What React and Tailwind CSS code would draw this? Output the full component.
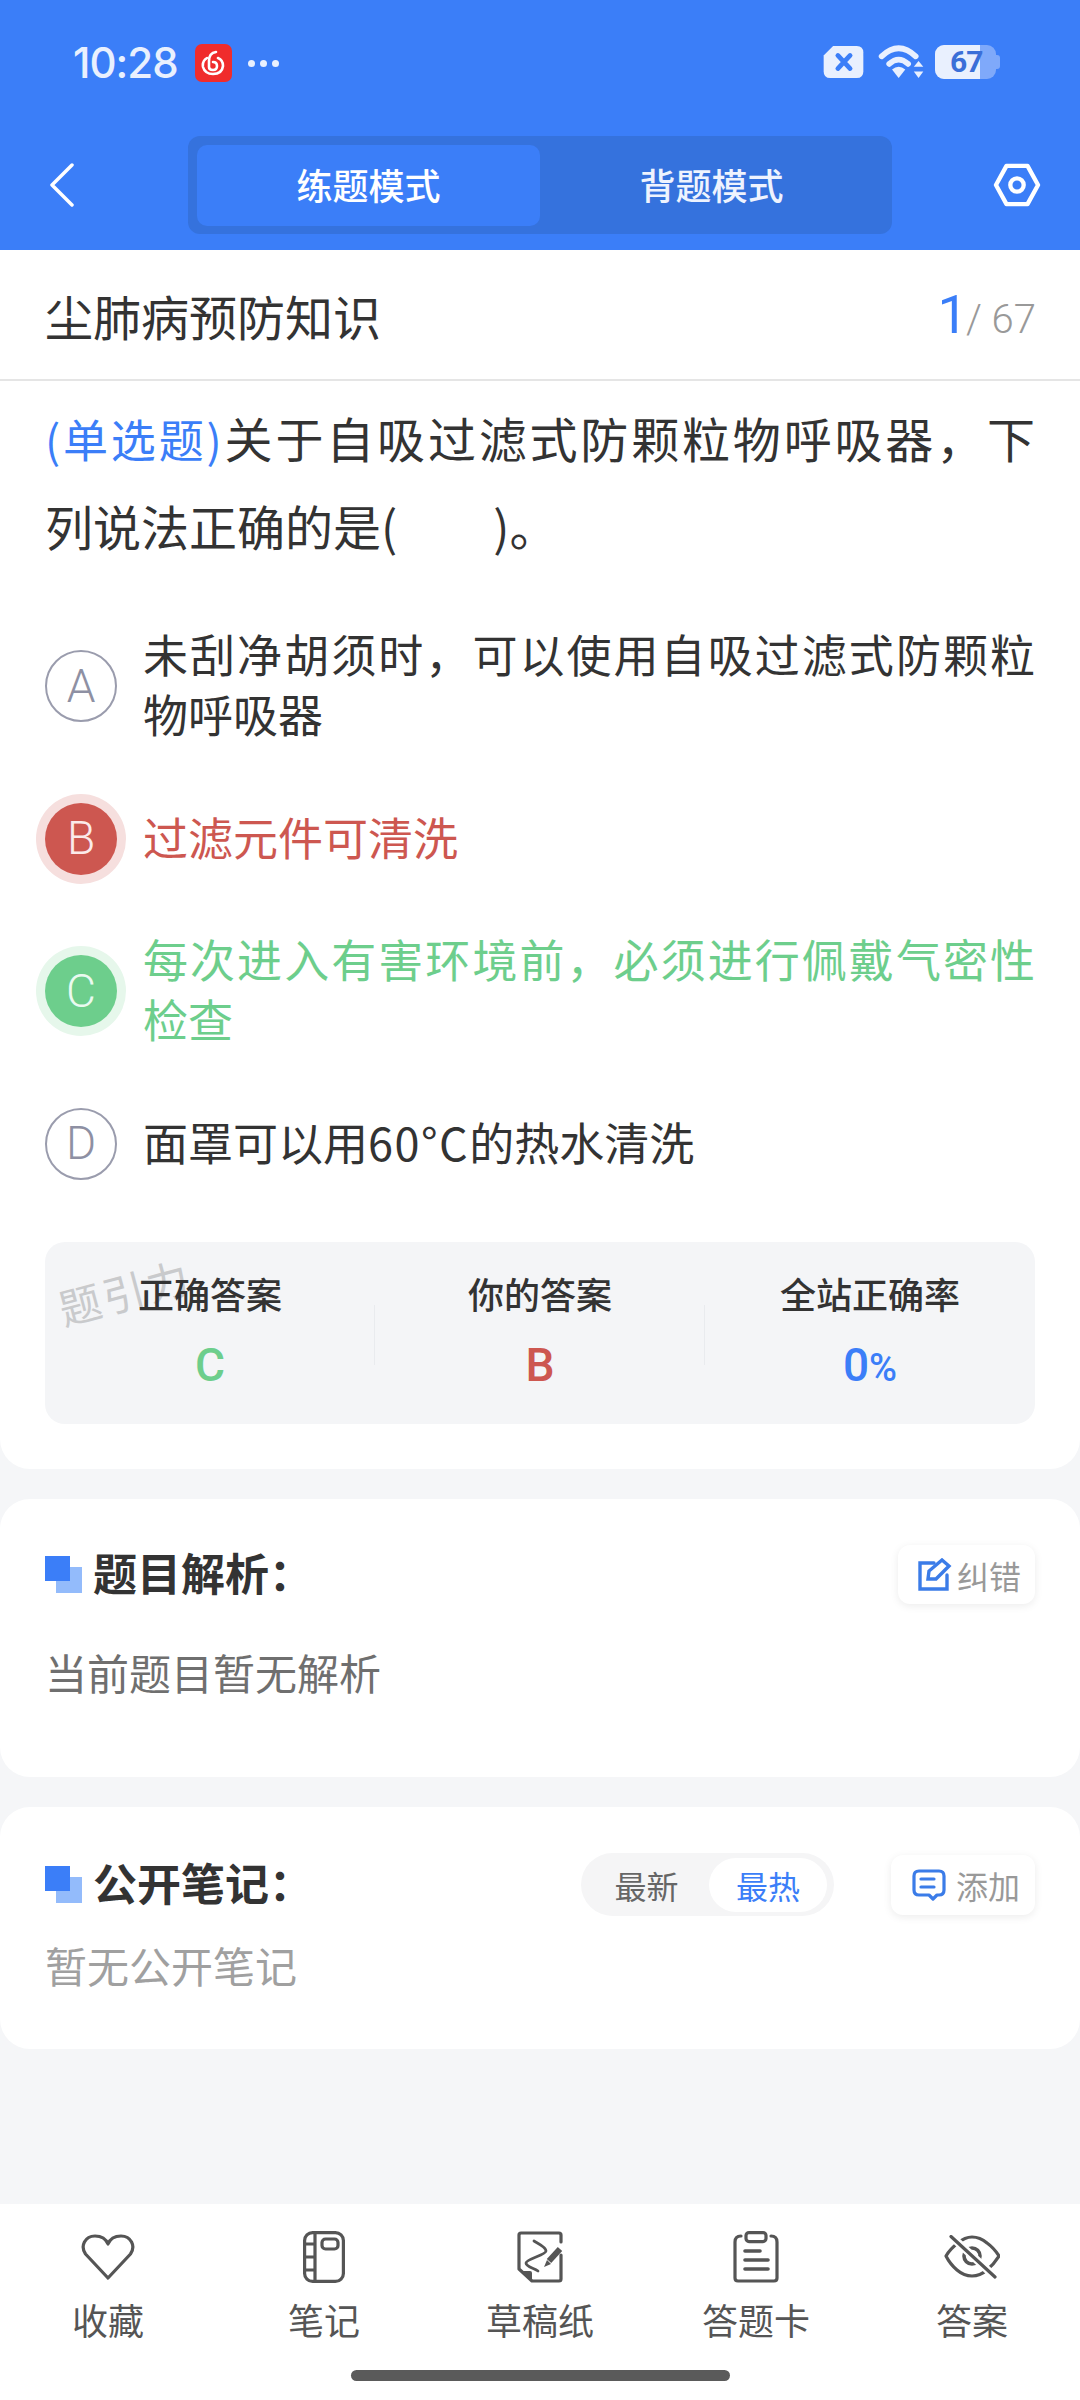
import React from 'react';

const cjk = { fontFamily: '"Noto Sans CJK SC", "Noto Sans", sans-serif' };

const BackIcon = () => (
  <svg width="28" height="44" viewBox="0 0 28 44" fill="none" stroke="#fff" strokeWidth="3.5" strokeLinecap="round" strokeLinejoin="round">
    <path d="M24 2 L4 22 L24 42" />
  </svg>
);

const SettingIcon = () => (
  <svg width="48" height="44" viewBox="0 0 50 46" fill="none" stroke="#fff" strokeWidth="4.5" strokeLinejoin="round">
    <path d="M14 3 H36 L47 23 L36 43 H14 L3 23 Z" />
    <circle cx="25" cy="23" r="7" />
  </svg>
);

const StatusIcons = () => (
  <div className="mt-[3px] flex items-center">
    <svg width="43" height="34" viewBox="0 0 44 36">
      <path d="M11 1 H36 Q43 1 43 8 V28 Q43 35 36 35 H8 Q1 35 1 28 V11 Z" fill="#e9f0fe" />
      <path d="M16 11 L29 25 M29 11 L16 25" stroke="#3b7ef8" strokeWidth="5" strokeLinecap="round" />
    </svg>
    <svg className="ml-[13px]" width="47" height="36" viewBox="0 0 48 38" fill="none">
      <path d="M3 13 Q21 -4 39 13" stroke="#e9f0fe" strokeWidth="6" strokeLinecap="round" />
      <path d="M11 21 Q21 12 31 21" stroke="#e9f0fe" strokeWidth="6" strokeLinecap="round" />
      <path d="M14 27 Q21 21 28 27 L21 36 Z" fill="#e9f0fe" />
      <path d="M37 24 L42 18 L47 24 Z M37 29 H47 L42 36 Z" fill="#e9f0fe" />
    </svg>
    <div className="relative ml-[10px] flex h-[34px] w-[65px] items-center">
      <div className="absolute left-0 top-0 h-[34px] w-[61px] rounded-[9px] bg-[#7fa9fa]" />
      <div className="absolute right-0 top-[10px] h-[14px] w-[5px] rounded-r-[3px] bg-[#7fa9fa]" />
      <div className="absolute left-0 top-0 h-[34px] w-[45px] rounded-l-[9px] bg-[#e9f0fe]" />
      <span className="relative ml-[15px] text-[30px] font-bold leading-none tracking-[-1px] text-[#3b6fd8]" style={{ fontFamily: 'Roboto, sans-serif' }}>67</span>
    </div>
  </div>
);

const Corner = () => (
  <div className="relative h-[37px] w-[37px] shrink-0">
    <div className="absolute bottom-0 right-0 h-[26px] w-[26px] bg-[#93bbfb]" />
    <div className="absolute left-0 top-0 h-[25px] w-[25px] bg-[#3b7ef8]" />
  </div>
);

const OPTIONS = [
  { key: 'A', text: '未刮净胡须时，可以使用自吸过滤式防颗粒物呼吸器', state: 'normal' },
  { key: 'B', text: '过滤元件可清洗', state: 'wrong' },
  { key: 'C', text: '每次进入有害环境前，必须进行佩戴气密性检查', state: 'right' },
  { key: 'D', text: <>面罩可以用<span className="tracking-[1.5px]">60°C</span>的热水清洗</>, state: 'normal' },
];

const Option = ({ item }) => {
  const badge = {
    normal: 'border-2 border-[#9a9cad] text-[#8e90a3]',
    wrong: 'bg-[#cd5750] text-[#fbeaea] ring-[9px] ring-[#f6dfde]',
    right: 'bg-[#6dce8c] text-[#eafaf0] ring-[9px] ring-[#e6f7eb]',
  }[item.state];
  const color = {
    normal: 'text-[#333333]',
    wrong: 'text-[#cd5750]',
    right: 'text-[#6dce8c]',
  }[item.state];
  return (
    <div className="flex items-center gap-[26px]">
      <div className={`flex h-[72px] w-[72px] shrink-0 items-center justify-center rounded-full text-[46px] ${badge}`} style={{ fontFamily: 'Roboto, sans-serif', fontWeight: 300 }}>
        {item.key}
      </div>
      <p className={`flex-1 pb-[4px] text-justify text-[45px] leading-[60px] ${color}`}>{item.text}</p>
    </div>
  );
};

const Stat = ({ label, children, line }) => (
  <div className="relative flex w-[330px] flex-col items-center">
    <span className="relative text-[36px] font-medium leading-[50px] text-[#333333]">{label}</span>
    <div className="mt-[22px] h-[50px] leading-[50px]" style={{ fontFamily: 'Roboto, sans-serif' }}>{children}</div>
    {line && <div className="absolute right-0 top-[37px] h-[60px] w-[1px] bg-[#e9ebee]" />}
  </div>
);

const EditIcon = () => (
  <svg width="34" height="33" viewBox="0 0 34 33" fill="none" stroke="#3b7ce8" strokeWidth="3.4" strokeLinecap="round" strokeLinejoin="miter">
    <path d="M16 5 H2 V31 H29 V17" />
    <path d="M10 21 L11 13 L24 2 L31 8 L18 21 Z" />
  </svg>
);

const NoteIcon = () => (
  <svg width="34" height="32" viewBox="0 0 34 32" fill="none" stroke="#3b7ce8" strokeWidth="3.2" strokeLinecap="round" strokeLinejoin="round">
    <path d="M7 2 H27 Q32 2 32 7 V21 Q32 26 27 26 H25 L21 30 L17 26 H7 Q2 26 2 21 V7 Q2 2 7 2 Z" />
    <path d="M9 10 H22 M9 18 H22" />
  </svg>
);

const NAV = [
  {
    label: '收藏',
    icon: (
      <svg width="54" height="46" viewBox="0 0 54 46" fill="none" stroke="#555" strokeWidth="3.2" strokeLinejoin="round">
        <path d="M27 44 L4.5 20 C-1 12 4 2 14 2 C20 2 25 5 27 10 C29 5 34 2 40 2 C50 2 55 12 49.5 20 Z" />
      </svg>
    ),
  },
  {
    label: '笔记',
    icon: (
      <svg width="42" height="52" viewBox="0 0 42 52" fill="none" stroke="#555" strokeWidth="3.2" strokeLinejoin="round">
        <rect x="1.6" y="1.6" width="38.8" height="48.8" rx="8" />
        <path d="M12 2 V50 M2 13 H12 M2 26 H12 M2 39 H12" />
        <rect x="19" y="8" width="16" height="10" rx="3.5" />
      </svg>
    ),
  },
  {
    label: '草稿纸',
    icon: (
      <svg width="46" height="52" viewBox="0 0 46 52" fill="none" stroke="#555" strokeWidth="3.2" strokeLinecap="round" strokeLinejoin="round">
        <path d="M44 11 V4 Q44 2 42 2 H4 Q2 2 2 4 V38 L15 50 H42 Q44 50 44 48 V24" />
        <path d="M3 40 H13 Q15 40 15 42 V50 Z" fill="#555" stroke="none" />
        <path d="M17 10 C22 13 29 16 29 20 C29 24 9 28 9 32 C9 36 17 37 21 40" strokeWidth="2.8" />
        <path d="M43 18 L32 30" strokeWidth="6" strokeLinecap="butt" />
        <path d="M30 29 L27 36 L34 33 Z" fill="#555" stroke="none" />
      </svg>
    ),
  },
  {
    label: '答题卡',
    icon: (
      <svg width="46" height="52" viewBox="0 0 46 52" fill="none" stroke="#555" strokeWidth="3.2" strokeLinecap="round" strokeLinejoin="round">
        <path d="M8 5 Q2 5 2 11 V47 Q2 50 5 50 H41 Q44 50 44 47 V11 Q44 5 38 5" />
        <rect x="13" y="1.6" width="20" height="9" rx="3" />
        <path d="M12 20 H27 M12 29 H35 M12 38 H35" strokeWidth="3.6" />
      </svg>
    ),
  },
  {
    label: '答案',
    icon: (
      <svg width="56" height="44" viewBox="0 0 56 44" fill="none" stroke="#555" strokeWidth="3.2" strokeLinecap="round" strokeLinejoin="round">
        <path d="M2 21 Q6 14 14 8 Q21 2 28 2 Q36 2 43 8 Q50 13 55 21 Q50 29 43 35 Q36 41 28 41 Q20 41 13 35 Q6 29 2 21 Z" />
        <circle cx="28" cy="21" r="8" strokeWidth="3.6" />
        <path d="M7 1 L51 42" stroke="#fff" strokeWidth="8" strokeLinecap="butt" />
        <path d="M7 1.5 L51 42" />
      </svg>
    ),
  },
];

export default function App() {
  return (
    <div className="flex h-[2400px] w-[1080px] flex-col overflow-hidden bg-[#f5f6f8]" style={cjk}>
      <header className="h-[250px] shrink-0 bg-[#3b7ef8]">
        <div className="flex h-[136px] items-start justify-between pl-[73px] pr-[80px] pt-[41px]">
          <div className="flex items-center">
            <span className="text-[42px] font-medium leading-[44px] tracking-[-1px] text-[#e9f0fe]" style={{ fontFamily: 'Inter, sans-serif' }}>10:28</span>
            <div className="ml-[17px] flex h-[38px] w-[37px] items-center justify-center rounded-[7px] bg-[#f02c2c]">
              <svg width="24" height="26" viewBox="0 0 24 26" fill="none" stroke="#fff" strokeWidth="2.6" strokeLinecap="round">
                <path d="M15 2 Q8 3 8 11 V17 Q8 20 12 20 Q16 20 16 16 Q16 12 12 12" />
                <path d="M6 8 Q1 11 2 17 Q4 24 12 24 Q21 24 22 16 Q22 10 17 8" />
              </svg>
            </div>
            <div className="ml-[16px] flex gap-[5px]">
              <div className="h-[7px] w-[7px] rounded-full bg-[#e9f0fe]" />
              <div className="h-[7px] w-[7px] rounded-full bg-[#e9f0fe]" />
              <div className="h-[7px] w-[7px] rounded-full bg-[#e9f0fe]" />
            </div>
          </div>
          <StatusIcons />
        </div>
        <div className="flex h-[98px] items-center pl-[48px]">
          <BackIcon />
          <div className="ml-[112px] flex h-[98px] w-[704px] items-center rounded-[12px] bg-[#3572dd] px-[9px]">
            <div className="flex h-[81px] w-[343px] items-center justify-center rounded-[10px] bg-[#3b7ef8] pb-[2px] text-[36px] font-medium text-white">练题模式</div>
            <div className="flex h-[81px] w-[343px] items-center justify-center pb-[2px] text-[36px] font-medium text-[#eef3fe]">背题模式</div>
          </div>
          <div className="ml-[101px]">
            <SettingIcon />
          </div>
        </div>
      </header>

      <main className="flex-1">
        <section className="rounded-b-[30px] bg-white pb-[45px]">
          <div className="flex h-[131px] items-center justify-between border-b-2 border-[#e5e5e5] pl-[45px] pr-[44px]">
            <h1 className="text-[48px] font-normal text-[#333333]">尘肺病预防知识</h1>
            <div className="flex items-baseline" style={{ fontFamily: 'Roboto, sans-serif' }}>
              <span className="text-[54px] font-normal text-[#3b7ef8]">1</span>
              <span className="-ml-[2px] text-[40px] font-light text-[#999999]">/ 67</span>
            </div>
          </div>
          <div className="px-[45px] pt-[13px]">
            <div className="text-[48px] leading-[86px] text-[#333333]">
              <p className="text-justify [text-align-last:justify]">
                <span className="text-[45px] text-[#3b7ef8]">(单选题)</span>关于自吸过滤式防颗粒物呼吸器，下
              </p>
              <p>列说法正确的是(　　)。</p>
            </div>
            <div className="mt-[56px] flex flex-col gap-[54.5px]">
              {OPTIONS.map((item) => <Option key={item.key} item={item} />)}
            </div>
            <div className="relative mt-[62px] flex h-[182px] items-start rounded-[20px] bg-[#f4f5f7] pt-[26px]">
              <span className="absolute left-[12px] top-[17px] -rotate-[15deg] text-[42px] tracking-[3px] text-[#c9cacc]">题引力</span>
              <Stat label="正确答案" line>
                <span className="text-[46px] font-medium text-[#6dce8c]">C</span>
              </Stat>
              <Stat label="你的答案" line>
                <span className="text-[46px] font-medium text-[#cd5750]">B</span>
              </Stat>
              <Stat label="全站正确率">
                <span className="text-[46px] font-medium text-[#3b7ef8]">0</span>
                <span className="text-[38px] font-medium text-[#3b7ef8]">%</span>
              </Stat>
            </div>
          </div>
        </section>

        <section className="mt-[30px] h-[278px] rounded-[30px] bg-white px-[45px] pt-[47px]">
          <div className="flex h-[58px] items-center justify-between">
            <div className="flex items-center gap-[11px]">
              <Corner />
              <h2 className="pb-[6px] text-[44px] font-bold text-[#333333]">题目解析：</h2>
            </div>
            <button className="flex h-[59px] w-[137px] items-center justify-center gap-[5px] rounded-[12px] bg-white pl-[6px] text-[32px] text-[#999999] shadow-[0_2px_8px_rgba(0,0,0,0.08)]">
              <EditIcon />纠错
            </button>
          </div>
          <p className="mt-[38px] text-[42px] leading-[60px] text-[#6f6f6f]">当前题目暂无解析</p>
        </section>

        <section className="mt-[30px] h-[242px] rounded-[30px] bg-white px-[45px] pt-[48px]">
          <div className="flex h-[60px] items-center">
            <Corner />
            <h2 className="ml-[11px] pb-[6px] text-[44px] font-bold text-[#333333]">公开笔记：</h2>
            <div className="ml-auto flex h-[63px] w-[253px] items-center rounded-full bg-[#f5f5f6] px-[7px] text-[32px]">
              <span className="w-[121px] pr-[4px] text-center text-[#666666]">最新</span>
              <span className="flex h-[54px] w-[118px] items-center justify-center rounded-full bg-white text-[#3b7ef8]">最热</span>
            </div>
            <button className="ml-[57px] flex h-[60px] w-[144px] items-center justify-center gap-[10px] rounded-[12px] bg-white pl-[6px] text-[32px] text-[#999999] shadow-[0_2px_8px_rgba(0,0,0,0.08)]">
              <NoteIcon />添加
            </button>
          </div>
          <p className="mt-[20px] text-[42px] leading-[60px] text-[#a0a0a0]">暂无公开笔记</p>
        </section>
      </main>

      <nav className="relative h-[196px] shrink-0 bg-white">
        <div className="grid grid-cols-5 pt-[24px]">
          {NAV.map((n) => (
            <div key={n.label} className="flex flex-col items-center">
              <div className="flex h-[58px] items-center justify-center">{n.icon}</div>
              <span className="mt-[8px] text-[36px] leading-[50px] text-[#555555]">{n.label}</span>
            </div>
          ))}
        </div>
        <div className="absolute bottom-[19px] left-[351px] h-[11px] w-[379px] rounded-full bg-[#5a5a5a]" />
      </nav>
    </div>
  );
}
